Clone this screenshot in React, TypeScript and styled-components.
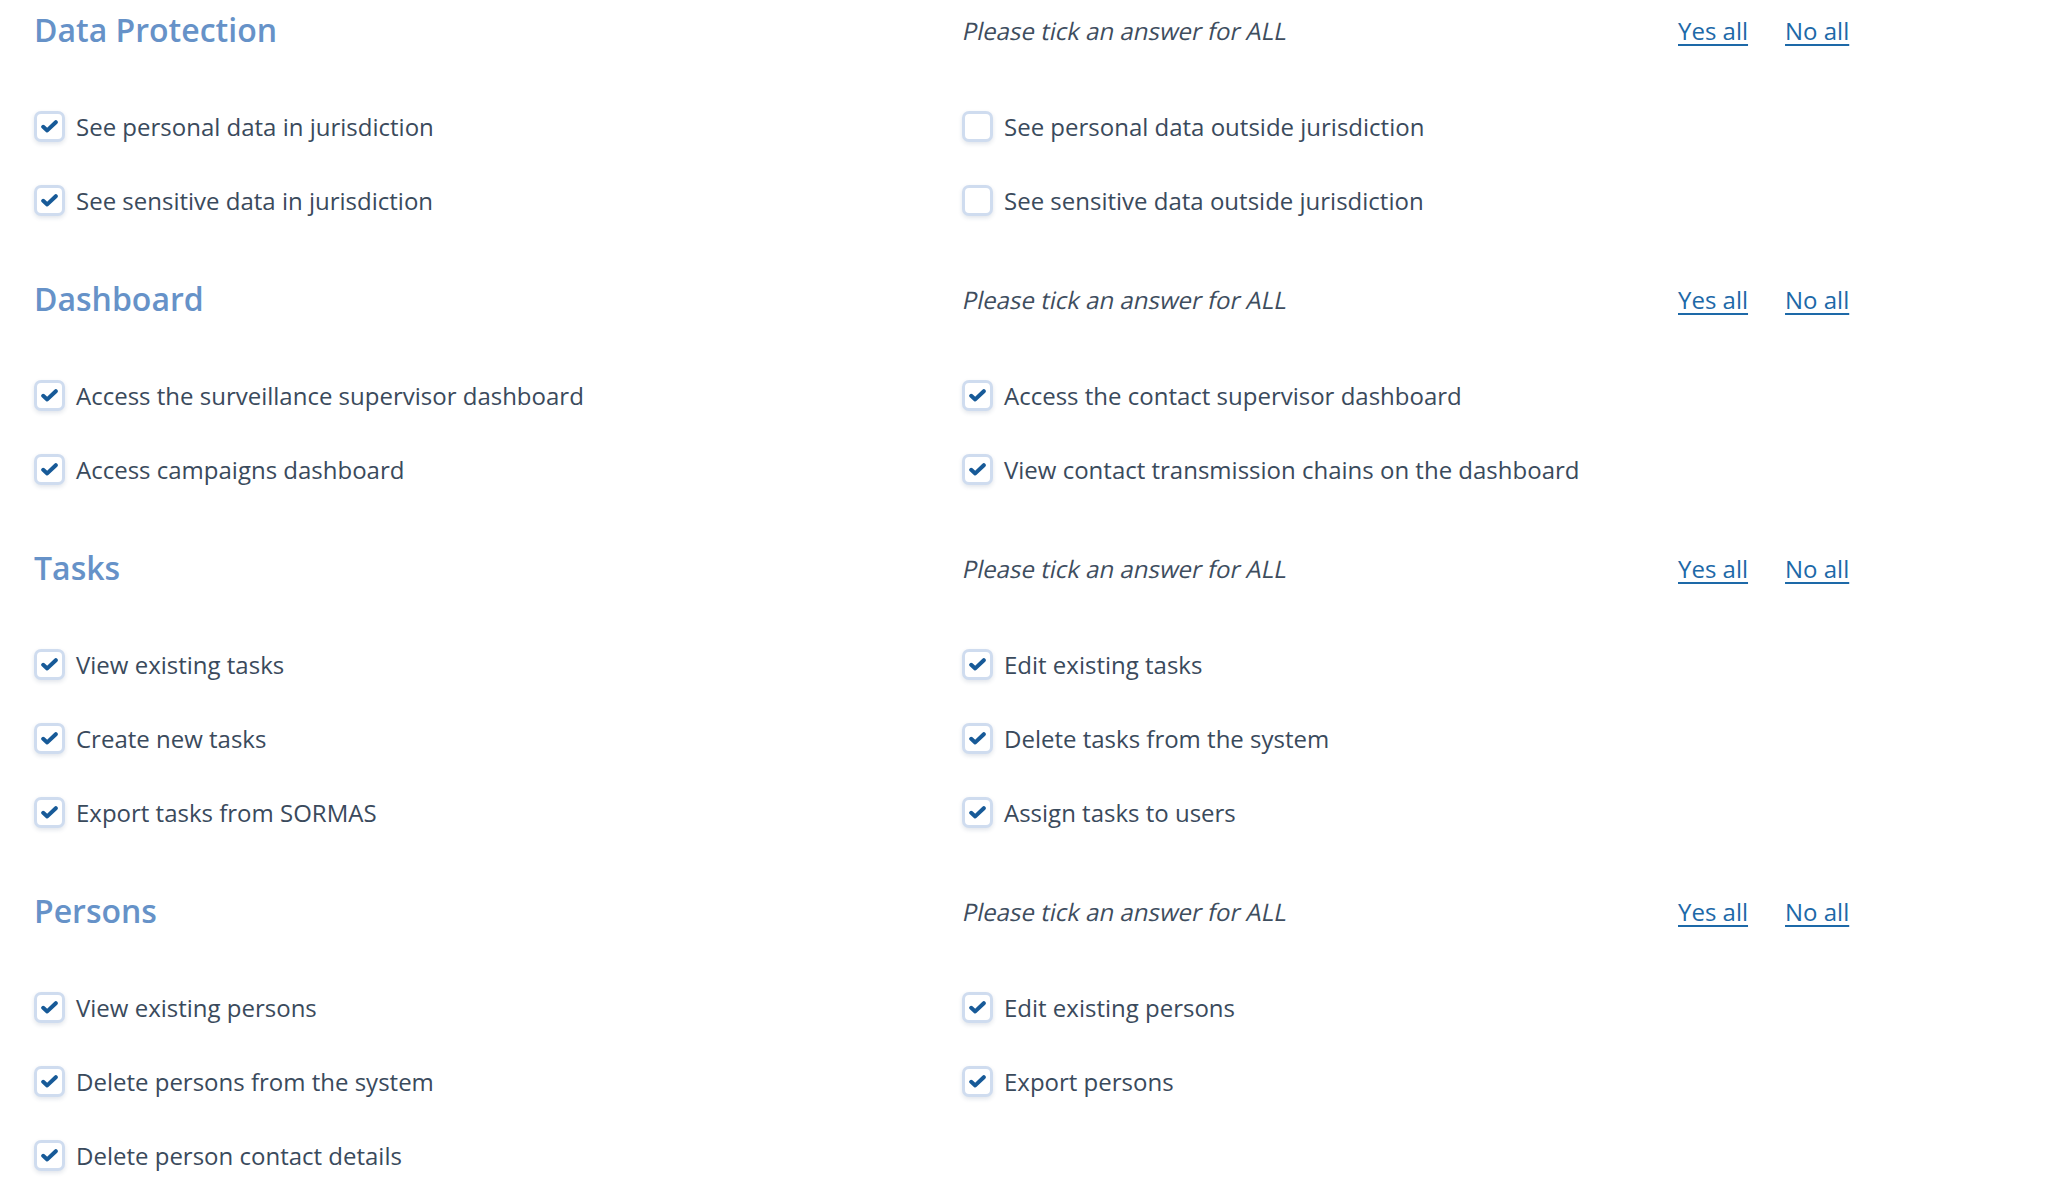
import React from 'react';
import styled, {createGlobalStyle} from 'styled-components';

const GlobalStyle = createGlobalStyle`
  body {
    margin: 0;
    background: #fff;
    font-family: "Open Sans", "Noto Sans", "Liberation Sans", sans-serif;
    color: #3a4a5c;
  }
`;

type Right = {label: string; checked: boolean};
type Section = {title: string; rights: Right[]};

const sections: Section[] = [
  {
    title: 'Data Protection',
    rights: [
      {label: 'See personal data in jurisdiction', checked: true},
      {label: 'See personal data outside jurisdiction', checked: false},
      {label: 'See sensitive data in jurisdiction', checked: true},
      {label: 'See sensitive data outside jurisdiction', checked: false},
    ],
  },
  {
    title: 'Dashboard',
    rights: [
      {label: 'Access the surveillance supervisor dashboard', checked: true},
      {label: 'Access the contact supervisor dashboard', checked: true},
      {label: 'Access campaigns dashboard', checked: true},
      {label: 'View contact transmission chains on the dashboard', checked: true},
    ],
  },
  {
    title: 'Tasks',
    rights: [
      {label: 'View existing tasks', checked: true},
      {label: 'Edit existing tasks', checked: true},
      {label: 'Create new tasks', checked: true},
      {label: 'Delete tasks from the system', checked: true},
      {label: 'Export tasks from SORMAS', checked: true},
      {label: 'Assign tasks to users', checked: true},
    ],
  },
  {
    title: 'Persons',
    rights: [
      {label: 'View existing persons', checked: true},
      {label: 'Edit existing persons', checked: true},
      {label: 'Delete persons from the system', checked: true},
      {label: 'Export persons', checked: true},
      {label: 'Delete person contact details', checked: true},
    ],
  },
];

const Page = styled.div`
  display: flex;
  flex-direction: column;
  gap: 32px;
  padding-left: 34px;
`;

const SectionWrapper = styled.section`
  display: flex;
  flex-direction: column;
`;

const SectionHeader = styled.div`
  display: grid;
  grid-template-columns: 929px 715px auto;
  align-items: center;
  height: 60px;
  margin-bottom: 29px;
`;

const Title = styled.h2`
  margin: 0;
  font-size: 32px;
  font-weight: 600;
  line-height: 60px;
  color: #6692c8;
`;

// the original uses a slanted regular face, not the true italic
const Hint = styled.span`
  justify-self: start;
  display: inline-block;
  font-size: 24px;
  color: #3e4d5e;
  transform: translateX(-3px) skewX(-12deg);
  transform-origin: 0 100%;
`;

const Links = styled.div`
  display: flex;
  gap: 37px;
`;

const LinkButton = styled.a`
  font-size: 24px;
  color: #1d69a8;
  text-decoration: underline;
  text-underline-offset: 4px;
  text-decoration-thickness: 2px;
  cursor: pointer;
`;

const Grid = styled.div`
  display: grid;
  grid-template-columns: 928px 928px;
  grid-auto-rows: 74px;
`;

const Row = styled.label`
  display: flex;
  align-items: center;
  gap: 11px;
  font-size: 24px;
  color: #3a4a5c;
  cursor: pointer;
`;

const Box = styled.span<{$checked: boolean}>`
  box-sizing: border-box;
  width: 31px;
  height: 31px;
  border: 3.5px solid #cfdcef;
  border-radius: 7px;
  background: #fff;
  box-shadow: 0 2px 4px rgba(40, 70, 110, 0.14);
  display: flex;
  align-items: center;
  justify-content: center;
  flex-shrink: 0;
  svg {
    visibility: ${p => (p.$checked ? 'visible' : 'hidden')};
  }
`;

function Checkbox({checked}: {checked: boolean}) {
  return (
    <Box $checked={checked}>
      <svg width="17" height="13" viewBox="0 0 17 13">
        <path d="M2.2 6.8 L6.2 10.4 L14.8 2.2" fill="none" stroke="#175a98" strokeWidth="4"
              strokeLinecap="round" strokeLinejoin="round"/>
      </svg>
    </Box>
  );
}

export default function App() {
  return (
    <>
      <GlobalStyle/>
      <Page>
        {sections.map(section => (
          <SectionWrapper key={section.title}>
            <SectionHeader>
              <Title>{section.title}</Title>
              <Hint>Please tick an answer for ALL</Hint>
              <Links>
                <LinkButton>Yes all</LinkButton>
                <LinkButton>No all</LinkButton>
              </Links>
            </SectionHeader>
            <Grid>
              {section.rights.map(right => (
                <Row key={right.label}>
                  <Checkbox checked={right.checked}/>
                  {right.label}
                </Row>
              ))}
            </Grid>
          </SectionWrapper>
        ))}
      </Page>
    </>
  );
}
